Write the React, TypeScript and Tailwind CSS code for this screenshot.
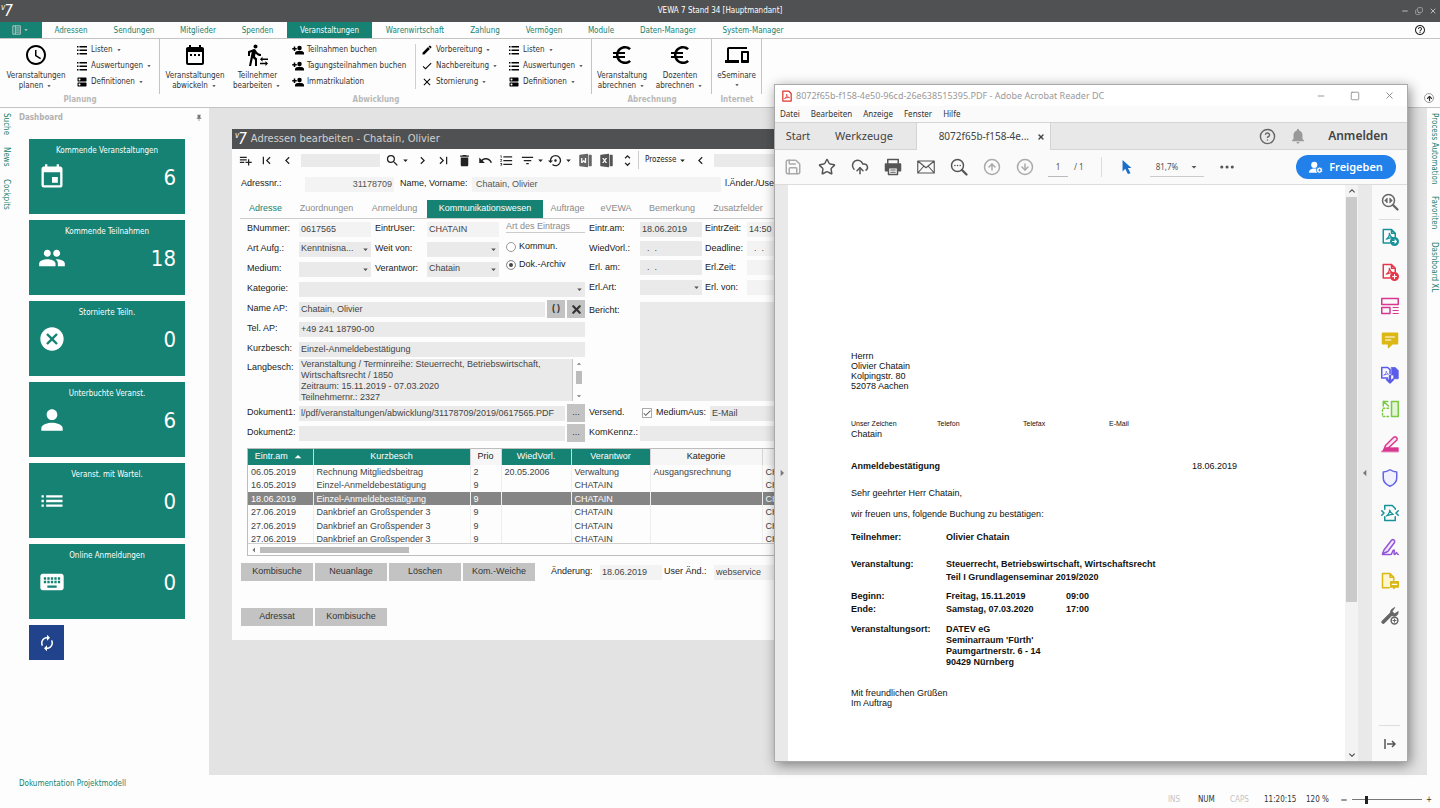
import React from 'react';
import clsx from 'clsx';
import {
  MdArrowDropDown, MdArrowDropUp, MdArrowLeft, MdArrowRight, MdAutorenew, MdCancel, MdCheck, MdChevronLeft, MdChevronRight,
  MdClear, MdDateRange, MdDelete, MdDevices, MdDns, MdEdit, MdEuroSymbol, MdEvent, MdFilterList, MdFirstPage,
  MdFormatListNumbered, MdHelpOutline, MdKeyboard, MdKeyboardArrowDown, MdKeyboardArrowUp, MdLastPage, MdList, MdPeople, MdPerson,
  MdPlaylistAdd, MdPushPin, MdSchedule, MdSearch, MdSettingsBackupRestore,
  MdTransferWithinAStation, MdUndo, MdUnfoldMore, MdNotifications,
} from 'react-icons/md';
import { RiFileWord2Fill, RiFileExcel2Fill } from 'react-icons/ri';
import {
  ArrowUp, CircleArrowDown, CircleArrowUp, CircleHelp, CloudUpload, Mail, Minus, Printer, Save, Square, Star, X, Copy,
} from 'lucide-react';

type Icon = React.ComponentType<{ className?: string }>;

const Logo: React.FC<{ className?: string }> = ({ className }) => (
  <span className={clsx('flex items-start italic text-white leading-none', className)}>
    <span className="text-[8px] leading-[8px] -mr-px">v</span>
    <span className="text-[15px] leading-[15px]">7</span>
  </span>
);

const ListIcon: Icon = ({ className }) => (
  <svg viewBox="0 0 24 24" className={className} fill="currentColor">
    <path d="M2 4h3v3H2zM2 11h3v3H2zM2 18h3v3H2zM7 4h15v3H7zM7 11h15v3H7zM7 18h15v3H7z" />
  </svg>
);

const AddPersonIcon: Icon = ({ className }) => (
  <svg viewBox="0 0 24 24" className={className} fill="currentColor">
    <circle cx="15" cy="8" r="4.500" />
    <path d="M6 21v-3c0-3 5-4.500 9-4.500s9 1.500 9 4.500v3z" />
    <path d="M3.500 5h3v3h3v3h-3v3h-3v-3h-3V8h3z" />
  </svg>
);

const MenuIcon: Icon = ({ className }) => (
  <svg viewBox="0 0 12 12" className={className} fill="none" stroke="currentColor">
    <path d="M1 1h9v10H1zM4 1v10M5 3.500h4M5 6h4M5 8.500h4" />
  </svg>
);

/* ---------- Ribbon ---------- */

const menuTabs = [
  { label: 'Adressen', width: 'w-[58px]' },
  { label: 'Sendungen', width: 'w-[68px]' },
  { label: 'Mitglieder', width: 'w-[60px]' },
  { label: 'Spenden', width: 'w-[59px]' },
  { label: 'Veranstaltungen', width: 'w-[85px]', active: true },
  { label: 'Warenwirtschaft', width: 'w-[86px]' },
  { label: 'Zahlung', width: 'w-[54px]' },
  { label: 'Vermögen', width: 'w-[64px]' },
  { label: 'Module', width: 'w-[50px]' },
  { label: 'Daten-Manager', width: 'w-[84px]' },
  { label: 'System-Manager', width: 'w-[86px]' },
];

const BigButton: React.FC<{ icon: Icon; lines: string[]; className?: string }> = ({ icon: Icon, lines, className }) => (
  <button className={clsx('flex flex-col items-center pt-1 leading-[10px] cursor-pointer', className)}>
    <Icon className="size-6 mb-1 text-black" />
    {lines.map((line, i) => (
      <span key={line} className="flex items-center gap-[2px] whitespace-nowrap">
        {line}
        {i === 1 && <MdArrowDropDown className="size-2" />}
      </span>
    ))}
    {lines.length === 1 && <MdArrowDropDown className="size-2" />}
  </button>
);

const SmallButtons: React.FC<{ items: { icon: Icon; label: string; menu?: boolean }[]; className?: string }> = ({ items, className }) => (
  <div className={clsx('flex flex-col pt-[3px]', className)}>
    {items.map(({ icon: Icon, label, menu }) => (
      <button key={label} className="h-4 flex items-center whitespace-nowrap cursor-pointer">
        <Icon className="size-3 mr-[3px] text-black" />
        {label}
        {menu && <MdArrowDropDown className="size-2 ml-[2px]" />}
      </button>
    ))}
  </div>
);

const RibbonGroup: React.FC<{ title: string; className?: string; children: React.ReactNode }> = ({ title, className, children }) => (
  <section className={clsx('flex flex-col', className)}>
    <div className="flex h-[55px] border-r border-[#c4c4c4]">{children}</div>
    <h2 className="text-center font-bold text-[#b9b9b9] leading-3">{title}</h2>
  </section>
);

const listItems = [
  { icon: ListIcon, label: 'Listen', menu: true },
  { icon: ListIcon, label: 'Auswertungen', menu: true },
  { icon: MdDns, label: 'Definitionen', menu: true },
];

const Ribbon: React.FC = () => (
  <div className="h-[70px] flex border-y border-[#c4c4c4] bg-[#fdfdfd] text-[#333]">
    <RibbonGroup title="Planung" className="w-[160px]">
      <BigButton icon={MdSchedule} lines={['Veranstaltungen', 'planen']} className="w-[72px]" />
      <SmallButtons items={listItems} className="ml-1" />
    </RibbonGroup>
    <RibbonGroup title="Abwicklung" className="w-[432px]">
      <BigButton icon={MdDateRange} lines={['Veranstaltungen', 'abwickeln']} className="w-[70px]" />
      <BigButton icon={MdTransferWithinAStation} lines={['Teilnehmer', 'bearbeiten']} className="w-[55px]" />
      <SmallButtons
        className="ml-[7px] w-[123px]"
        items={[
          { icon: AddPersonIcon, label: 'Teilnahmen buchen' },
          { icon: AddPersonIcon, label: 'Tagungsteilnahmen buchen' },
          { icon: AddPersonIcon, label: 'Immatrikulation' },
        ]}
      />
      <div className="my-[5px] border-l border-[#d0d0d0]" />
      <SmallButtons
        className="ml-[5px] w-[87px]"
        items={[
          { icon: MdEdit, label: 'Vorbereitung', menu: true },
          { icon: MdCheck, label: 'Nachbereitung', menu: true },
          { icon: MdClear, label: 'Stornierung', menu: true },
        ]}
      />
      <SmallButtons items={listItems} />
    </RibbonGroup>
    <RibbonGroup title="Abrechnung" className="w-[120px]">
      <BigButton icon={MdEuroSymbol} lines={['Veranstaltung', 'abrechnen']} className="w-[60px]" />
      <BigButton icon={MdEuroSymbol} lines={['Dozenten', 'abrechnen']} className="w-[56px]" />
    </RibbonGroup>
    <RibbonGroup title="Internet" className="w-[50px]">
      <BigButton icon={MdDevices} lines={['eSeminare']} className="w-[49px]" />
    </RibbonGroup>
    <button aria-label="Menüband minimieren" className="ml-auto mr-[6px] mb-1 self-end size-[10px] rounded-full border border-[#999] flex items-center justify-center">
      <ArrowUp className="size-[7px]" strokeWidth={4} />
    </button>
  </div>
);

/* ---------- Dashboard ---------- */

const tiles = [
  { label: 'Kommende Veranstaltungen', value: 6, icon: MdEvent, size: 'size-7' },
  { label: 'Kommende Teilnahmen', value: 18, icon: MdPeople, size: 'size-7' },
  { label: 'Stornierte Teiln.', value: 0, icon: MdCancel, size: 'size-7' },
  { label: 'Unterbuchte Veranst.', value: 6, icon: MdPerson, size: 'size-8' },
  { label: 'Veranst. mit Wartel.', value: 0, icon: MdList, size: 'size-7' },
  { label: 'Online Anmeldungen', value: 0, icon: MdKeyboard, size: 'size-7' },
];

const SideRail: React.FC<{ items: string[]; className?: string }> = ({ items, className }) => (
  <nav className={clsx('shrink-0 flex flex-col items-center gap-3 pt-[5px] text-[#17826f]', className)}>
    {items.map((item) => (
      <a key={item} href="#" className="[writing-mode:vertical-rl] leading-3 whitespace-nowrap">{item}</a>
    ))}
  </nav>
);

const Dashboard: React.FC = () => (
  <aside className="w-[197px] shrink-0">
    <header className="h-[31px] pt-1 pl-[7px] pr-[6px] flex items-start justify-between">
      <h2 className="font-bold text-[#b0b0b0] leading-3">Dashboard</h2>
      <button aria-label="Anheften" className="h-3 flex items-center"><MdPushPin className="size-2 text-[#777]" /></button>
    </header>
    <div className="flex flex-col gap-[6px] pl-[17px] pr-6">
      {tiles.map(({ label, value, icon: Icon, size }) => (
        <button key={label} className="h-[75px] bg-[#158273] text-white flex flex-col pt-[6px] cursor-pointer">
          <span className="w-full text-center leading-3">{label}</span>
          <span className="w-full flex items-start justify-between pl-[7px] pr-[9px] pt-1">
            <span className="size-8 flex items-center justify-center">
              <Icon className={size} />
            </span>
            <span className="text-[22px] leading-[34px]">{value}</span>
          </span>
        </button>
      ))}
      <button aria-label="Aktualisieren" className="size-[35px] bg-[#20438c] text-white flex items-center justify-center cursor-pointer">
        <MdAutorenew className="size-[18px]" />
      </button>
    </div>
  </aside>
);

/* ---------- Address window ---------- */

const fieldStyle = 'h-[15px] min-w-0 px-[2px] pb-px text-[#444] outline-none';

interface FieldProps {
  id: string;
  label: string;
  value?: string;
  light?: boolean;
  labelClass: string;
  fieldClass: string;
}

const Field: React.FC<FieldProps> = ({ id, label, value = '', light, labelClass, fieldClass }) => (
  <>
    <label htmlFor={id} className={clsx('shrink-0 whitespace-nowrap', labelClass)}>{label}</label>
    <input id={id} defaultValue={value} className={clsx(fieldStyle, light ? 'bg-[#f3f3f3]' : 'bg-[#eaeaea]', fieldClass)} />
  </>
);

const SelectField: React.FC<FieldProps> = ({ id, label, value = '', labelClass, fieldClass }) => (
  <>
    <label htmlFor={id} className={clsx('shrink-0 whitespace-nowrap', labelClass)}>{label}</label>
    <span className={clsx('relative flex', fieldClass)}>
      <select id={id} defaultValue={value} className={clsx(fieldStyle, 'w-full appearance-none bg-[#eaeaea] pr-3')}>
        <option>{value}</option>
      </select>
      <MdArrowDropDown className="absolute right-0 top-[2px] size-[11px] text-[#555] pointer-events-none" />
    </span>
  </>
);

const ToolButton: React.FC<{ icon: Icon; label: string; menu?: boolean; className?: string }> = ({ icon: Icon, label, menu, className }) => (
  <button aria-label={label} className={clsx('h-full shrink-0 flex items-center justify-center cursor-pointer', menu ? 'w-7' : 'w-[21px]', className)}>
    <Icon className="size-[15px]" />
    {menu && <MdArrowDropDown className="size-[11px]" />}
  </button>
);

const formTabs = [
  { label: 'Adresse', width: 'w-[51px]', color: 'text-[#17826f]' },
  { label: 'Zuordnungen', width: 'w-[71px]' },
  { label: 'Anmeldung', width: 'w-[65px]' },
  { label: 'Kommunikationswesen', width: 'w-[116px]', color: 'bg-[#158273] text-white' },
  { label: 'Aufträge', width: 'w-[49px]' },
  { label: 'eVEWA', width: 'w-[48px]' },
  { label: 'Bemerkung', width: 'w-[64px]' },
  { label: 'Zusatzfelder', width: 'w-[68px]' },
];

const columns = [
  { label: 'Eintr.am', width: 'w-[65px]', green: true },
  { label: 'Kurzbesch', width: 'w-[157px]', green: true },
  { label: 'Prio', width: 'w-[31px]' },
  { label: 'WiedVorl.', width: 'w-[70px]', green: true },
  { label: 'Verantwor', width: 'w-[79px]', green: true },
  { label: 'Kategorie', width: 'w-[112px]' },
  { label: '', width: 'w-[30px]' },
];

const rows = [
  ['06.05.2019', 'Rechnung Mitgliedsbeitrag', '2', '20.05.2006', 'Verwaltung', 'Ausgangsrechnung', 'CH'],
  ['16.05.2019', 'Einzel-Anmeldebestätigung', '9', '', 'CHATAIN', '', 'CH'],
  ['18.06.2019', 'Einzel-Anmeldebestätigung', '9', '', 'CHATAIN', '', 'CH'],
  ['27.06.2019', 'Dankbrief an Großspender 3', '9', '', 'CHATAIN', '', 'CH'],
  ['27.06.2019', 'Dankbrief an Großspender 3', '9', '', 'CHATAIN', '', 'CH'],
  ['27.06.2019', 'Dankbrief an Großspender 3', '9', '', 'CHATAIN', '', 'CH'],
];

const greyButton = 'bg-[#c3c3c3] text-[#333] flex items-center justify-center cursor-pointer';
const row = 'h-5 flex items-center';

const HistoryTable: React.FC = () => (
  <div className="border border-[#bdbdbd]">
    <div className="h-[94px] overflow-hidden">
      <table className="table-fixed w-[544px] border-collapse text-[#444]">
        <thead>
          <tr className="h-4">
            {columns.map((col, i) => (
              <th
                key={i}
                className={clsx('p-0 font-normal border-l border-[#d5d5d5] first:border-l-0', col.width, col.green ? 'bg-[#158273] text-white' : 'bg-[#f6f6f6] text-[#222]')}
              >
                <span className="flex items-center justify-center">
                  {col.label}
                  {i === 0 && <MdArrowDropUp className="size-4 ml-[2px] -my-1" />}
                </span>
              </th>
            ))}
          </tr>
        </thead>
        <tbody>
          {rows.map((cells, r) => (
            <tr key={r} className={clsx('odd:h-[13px] even:h-[14px]', r === 2 && 'bg-[#858585] text-white')}>
              {cells.map((cell, c) => (
                <td key={c} className="p-0 pl-[3px] leading-[12px] whitespace-nowrap border-l border-[#eee] first:border-l-0">{cell}</td>
              ))}
            </tr>
          ))}
        </tbody>
      </table>
    </div>
    <div className="h-[12px] flex items-center border-t border-[#cfcfcf]">
      <MdArrowLeft className="size-3 text-[#777]" />
      <div className="w-[149px] h-[6px] bg-[#bcbcbc]" />
    </div>
  </div>
);

const AddressWindow: React.FC = () => (
  <section className="w-[560px] h-[511px] overflow-hidden bg-[#fdfdfd] font-['Liberation_Sans',Arial,sans-serif] text-[9px] text-[#222]">
    <header className="h-5 bg-[#505153] flex items-center gap-1 pl-[3px] font-['DejaVu_Sans_Condensed','DejaVu_Sans',sans-serif]">
      <Logo />
      <h1 className="text-[11px] text-[#d2d2d2]">Adressen bearbeiten - Chatain, Olivier</h1>
    </header>

    <div className="h-[22px] flex items-center pl-[3px] text-[#222]">
      <ToolButton icon={MdPlaylistAdd} label="Neu" />
      <ToolButton icon={MdFirstPage} label="Erster" />
      <ToolButton icon={MdChevronLeft} label="Zurück" />
      <input aria-label="Suchbegriff" className="w-[79px] h-[13px] ml-[3px] bg-[#eaeaea]" />
      <ToolButton icon={MdSearch} label="Suchen" menu className="ml-1" />
      <ToolButton icon={MdChevronRight} label="Weiter" />
      <ToolButton icon={MdLastPage} label="Letzter" />
      <ToolButton icon={MdDelete} label="Löschen" />
      <ToolButton icon={MdUndo} label="Rückgängig" />
      <ToolButton icon={MdFormatListNumbered} label="Liste" />
      <ToolButton icon={MdFilterList} label="Filter" menu className="ml-[2px]" />
      <ToolButton icon={MdSettingsBackupRestore} label="Verlauf" menu />
      <ToolButton icon={RiFileWord2Fill} label="Word" className="text-[#666]" />
      <ToolButton icon={RiFileExcel2Fill} label="Excel" className="text-[#555]" />
      <ToolButton icon={MdUnfoldMore} label="Mehr" />
      <div className="h-[18px] shrink-0 border-l border-[#ccc]" />
      <button className="ml-[6px] flex shrink-0 items-center font-['DejaVu_Sans_Condensed','DejaVu_Sans',sans-serif] text-[8px]">
        Prozesse<MdArrowDropDown className="size-[11px]" />
      </button>
      <ToolButton icon={MdChevronLeft} label="Prozess zurück" className="ml-[2px]" />
      <input aria-label="Prozess" className="flex-1 min-w-0 h-[13px] ml-[3px] bg-[#eaeaea]" />
    </div>

    <div className="h-[26px] flex items-center pl-[9px]">
      <label htmlFor="adressnr" className="w-[64px] shrink-0">Adressnr.:</label>
      <input id="adressnr" defaultValue="31178709" className="w-[89px] h-[15px] px-[2px] bg-[#f3f3f3] text-right text-[#555]" />
      <label htmlFor="name" className="w-[78px] shrink-0 pl-[6px] whitespace-nowrap">Name, Vorname:</label>
      <input id="name" defaultValue="Chatain, Olivier" className="w-[249px] h-[15px] px-1 bg-[#f3f3f3] text-[#555]" />
      <span className="pl-1 whitespace-nowrap">l.Änder./Use</span>
    </div>

    <div role="tablist" className="ml-2 h-[22px] pt-[3px] flex border-b border-[#ccc]">
      {formTabs.map(({ label, width, color = 'text-[#8c8c8c]' }) => (
        <button key={label} role="tab" className={clsx('shrink-0 cursor-pointer', width, color)}>{label}</button>
      ))}
    </div>

    <div className="flex gap-1 pl-[15px]">
      <div className="w-[338px] shrink-0">
        <div className="flex">
          <div className="w-[252px] shrink-0">
            <div className={row}>
              <Field id="bnummer" label="BNummer:" value="0617565" light labelClass="w-[52px]" fieldClass="w-[72px] mr-1" />
              <Field id="eintruser" label="EintrUser:" value="CHATAIN" light labelClass="w-[52px]" fieldClass="w-[72px]" />
            </div>
            <div className={row}>
              <SelectField id="artaufg" label="Art Aufg.:" value="Kenntnisna..." labelClass="w-[52px]" fieldClass="w-[72px] mr-1" />
              <SelectField id="weitvon" label="Weit von:" labelClass="w-[52px]" fieldClass="w-[72px]" />
            </div>
            <div className={row}>
              <SelectField id="medium" label="Medium:" labelClass="w-[52px]" fieldClass="w-[72px] mr-1" />
              <SelectField id="verantwor" label="Verantwor:" value="Chatain" labelClass="w-[52px]" fieldClass="w-[72px]" />
            </div>
          </div>
          <fieldset className="flex-1 ml-[7px] flex flex-col">
            <legend className="w-full pt-[2px] leading-[11px] border-b border-[#ccc] text-[#8c8c8c] whitespace-nowrap">Art des Eintrags</legend>
            <label className="h-[18px] mt-[5px] flex items-center gap-[3px]">
              <input type="radio" name="art" className="size-[10px] rounded-full border border-[#999] bg-white appearance-none" />
              Kommun.
            </label>
            <label className="h-[18px] flex items-center gap-[3px]">
              <input type="radio" name="art" defaultChecked className="size-[10px] rounded-full border border-[#999] bg-white appearance-none checked:bg-[#444] checked:shadow-[inset_0_0_0_2px_white]" />
              Dok.-Archiv
            </label>
          </fieldset>
        </div>
        <div className={row}>
          <SelectField id="kategorie" label="Kategorie:" labelClass="w-[52px]" fieldClass="flex-1" />
        </div>
        <div className={row}>
          <Field id="nameap" label="Name AP:" value="Chatain, Olivier" labelClass="w-[52px]" fieldClass="flex-1" />
          <button aria-label="Neu laden" className={clsx(greyButton, 'size-[18px] ml-[2px] font-bold gap-[2px]')}><span>(</span><span>)</span></button>
          <button aria-label="Leeren" className={clsx(greyButton, 'size-[18px] ml-[2px]')}><X className="size-[13px]" strokeWidth={4} /></button>
        </div>
        <div className={row}>
          <Field id="telap" label="Tel. AP:" value="+49 241 18790-00" labelClass="w-[52px]" fieldClass="flex-1" />
        </div>
        <div className={row}>
          <Field id="kurz" label="Kurzbesch:" value="Einzel-Anmeldebestätigung" labelClass="w-[52px]" fieldClass="flex-1" />
        </div>
        <div className="h-11 flex items-start">
          <label htmlFor="lang" className="w-[52px] shrink-0 pt-[2px]">Langbesch:</label>
          <textarea
            id="lang"
            className="flex-1 h-[42px] px-[2px] bg-[#eaeaea] border-r border-[#c4c4c4] text-[#444] leading-[11px] resize-none overflow-hidden whitespace-pre"
            defaultValue={'Veranstaltung / Terminreihe: Steuerrecht, Betriebswirtschaft,\nWirtschaftsrecht / 1850\nZeitraum: 15.11.2019 - 07.03.2020\nTeilnehmernr.: 2327'}
          />
          <div className="w-3 h-[42px] flex flex-col items-center justify-between text-[#777]">
            <MdArrowDropUp className="size-[10px]" />
            <div className="w-[6px] h-[13px] mb-[5px] bg-[#bcbcbc]" />
            <MdArrowDropDown className="size-[10px]" />
          </div>
        </div>
        <div className={row}>
          <Field id="dok1" label="Dokument1:" value="l/pdf/veranstaltungen/abwicklung/31178709/2019/0617565.PDF" labelClass="w-[52px]" fieldClass="flex-1" />
          <button aria-label="Dokument1 wählen" className={clsx(greyButton, 'size-[18px] ml-[2px]')}>...</button>
        </div>
        <div className={row}>
          <Field id="dok2" label="Dokument2:" labelClass="w-[52px]" fieldClass="flex-1" />
          <button aria-label="Dokument2 wählen" className={clsx(greyButton, 'size-[18px] ml-[2px]')}>...</button>
        </div>
      </div>

      <div className="flex-1 min-w-0">
        <div className={row}>
          <Field id="eintram" label="Eintr.am:" value="18.06.2019" labelClass="w-[51px]" fieldClass="w-[62px] mr-[3px]" />
          <Field id="eintrzeit" label="EintrZeit:" value="14:50" light labelClass="w-[42px]" fieldClass="flex-1" />
        </div>
        <div className="h-[19px] flex items-center">
          <Field id="wied" label="WiedVorl.:" value="  .  ." labelClass="w-[51px]" fieldClass="w-[62px] mr-[3px]" />
          <Field id="deadline" label="Deadline:" value="  .  ." light labelClass="w-[42px]" fieldClass="flex-1" />
        </div>
        <div className="h-[19px] flex items-center">
          <Field id="erlam" label="Erl. am:" value="  .  ." labelClass="w-[51px]" fieldClass="w-[62px] mr-[3px]" />
          <Field id="erlzeit" label="Erl.Zeit:" light labelClass="w-[42px]" fieldClass="flex-1" />
        </div>
        <div className="h-[21px] flex items-center">
          <SelectField id="erlart" label="Erl.Art:" labelClass="w-[51px]" fieldClass="w-[62px] mr-[3px]" />
          <Field id="erlvon" label="Erl. von:" light labelClass="w-[42px]" fieldClass="flex-1" />
        </div>
        <div className="h-[105px] flex pt-1">
          <label htmlFor="bericht" className="w-[51px] shrink-0 pt-[2px]">Bericht:</label>
          <textarea id="bericht" className="flex-1 min-w-0 h-[99px] bg-[#eaeaea] resize-none" />
        </div>
        <div className={row}>
          <label htmlFor="versend" className="w-[53px] shrink-0">Versend.</label>
          <span className="relative flex shrink-0 mr-1">
            <input id="versend" type="checkbox" defaultChecked className="size-[10px] border border-[#aaa] bg-white appearance-none" />
            <MdCheck className="absolute left-0 top-0 size-[10px] text-[#555] pointer-events-none" />
          </span>
          <Field id="mediumaus" label="MediumAus:" value="E-Mail" labelClass="w-[54px]" fieldClass="flex-1" />
        </div>
        <div className={row}>
          <Field id="komkennz" label="KomKennz.:" labelClass="w-[51px]" fieldClass="flex-1" />
        </div>
      </div>
    </div>

    <div className="pl-[15px] pt-[5px]">
      <HistoryTable />
    </div>

    <div className="pl-[9px] mt-[7px] flex items-center gap-[2px]">
      {['Kombisuche', 'Neuanlage', 'Löschen', 'Kom.-Weiche'].map((label) => (
        <button key={label} className={clsx(greyButton, 'w-[72px] h-[18px] shrink-0')}>{label}</button>
      ))}
      <div className="flex flex-1 min-w-0 items-center pl-[14px]">
        <Field id="aenderung" label="Änderung:" value="18.06.2019" light labelClass="w-[49px]" fieldClass="w-[62px]" />
        <Field id="useraend" label="User Änd.:" value="webservice" light labelClass="w-[52px] pl-[2px]" fieldClass="flex-1" />
      </div>
    </div>
    <div className="pl-[9px] mt-[27px] flex gap-[2px]">
      {['Adressat', 'Kombisuche'].map((label) => (
        <button key={label} className={clsx(greyButton, 'w-[72px] h-[18px]')}>{label}</button>
      ))}
    </div>
  </section>
);

/* ---------- Acrobat window ---------- */

const Glyph: React.FC<{ color: string; children: React.ReactNode }> = ({ color, children }) => (
  <svg viewBox="0 0 24 24" className={clsx('size-[18px]', color)} fill="none" stroke="currentColor" strokeWidth="2" strokeLinejoin="round" strokeLinecap="round">
    {children}
  </svg>
);

const swirl = 'M7 15c3-2 4.500-5 4-8 1 4 3 5.500 5 6-3-.5-6 .5-9 2z';

const railTools = [
  {
    label: 'PDF exportieren',
    icon: (
      <Glyph color="text-[#17929a]">
        <path d="M12 20H3V2h11l5 5v5M14 2v5h5" />
        <path d={swirl} strokeWidth="1.500" />
        <circle cx="18" cy="18" r="5" fill="currentColor" />
        <path d="M15.500 18h5M18.500 16l2 2-2 2" stroke="white" strokeWidth="1.500" />
      </Glyph>
    ),
  },
  {
    label: 'PDF erstellen',
    icon: (
      <Glyph color="text-[#e6374a]">
        <path d="M12 20H3V2h11l5 5v5M14 2v5h5" />
        <path d={swirl} strokeWidth="1.500" />
        <circle cx="18" cy="18" r="5" fill="currentColor" />
        <path d="M15.500 18h5M18 15.500v5" stroke="white" strokeWidth="1.500" />
      </Glyph>
    ),
  },
  {
    label: 'PDF bearbeiten',
    icon: (
      <Glyph color="text-[#d83790]">
        <path d="M1 2h22v8H1zM1 14h11v8H1z" />
        <path d="M16 14h7M16 18h7M16 22h7" strokeWidth="1.500" />
      </Glyph>
    ),
  },
  {
    label: 'Kommentieren',
    icon: (
      <Glyph color="text-[#dcb816]">
        <path d="M2 3h20v14h-7l-5 5v-5H2z" fill="currentColor" />
        <path d="M6 8h12M6 12h7" stroke="white" strokeWidth="1.500" />
      </Glyph>
    ),
  },
  {
    label: 'Dateien zusammenführen',
    icon: (
      <Glyph color="text-[#5b5bea]">
        <path d="M9 16H1V2h8l3 3v5" />
        <path d="M4 12c2-1 3-3 3-5 .5 2.500 2 3.500 3 4-2-.3-4 0-6 1z" strokeWidth="1" />
        <path d="M14 2h5l4 4v11h-6v-5h-3z" fill="currentColor" strokeWidth="1" />
        <path d="M12 13v8M8 18l4 4 4-4" strokeWidth="3" />
      </Glyph>
    ),
  },
  {
    label: 'Seiten verwalten',
    icon: (
      <Glyph color="text-[#7ac943]">
        <path d="M14 2h9v20h-9z" fill="#e2f5d4" />
        <path d="M10 22H2v-11h8" strokeDasharray="2 3" />
        <path d="M10 8L3 2M3 8V2h6" />
      </Glyph>
    ),
  },
  {
    label: 'Schwärzen',
    icon: (
      <Glyph color="text-[#d83790]">
        <path d="M6 14L17 3c2-2 6 1 4 4L10 17l-6 2z" fill="#fbe3f0" />
        <path d="M1 22l5-5h17v5z" fill="currentColor" strokeWidth="1" />
      </Glyph>
    ),
  },
  {
    label: 'Schützen',
    icon: (
      <Glyph color="text-[#6464e8]">
        <path d="M12 1c3 2 6 3 9 3v8c0 5-4 9-9 11-5-2-9-6-9-11V4c3 0 6-1 9-3z" fill="#f0f0ff" />
      </Glyph>
    ),
  },
  {
    label: 'PDF optimieren',
    icon: (
      <Glyph color="text-[#17929a]">
        <path d="M5 7V2h10l4 4v1M5 17v5h14v-5" />
        <path d="M7 16c3-2 4.500-4 4.500-8 1 4 3 5 5 6-3-.5-6 .5-9.500 2z" strokeWidth="1.500" />
        <path d="M1 9l3 3-3 3M23 9l-3 3 3 3" />
      </Glyph>
    ),
  },
  {
    label: 'Ausfüllen und unterschreiben',
    icon: (
      <Glyph color="text-[#9256d9]">
        <path d="M4 16L14 3c2-2 5 0 4 3L9 18l-7 3z" fill="#f3e8ff" />
        <path d="M2 22h11c2 0 2-6 4-6s-1 6 1 6 2-4 3-2 1 2 2 2" />
      </Glyph>
    ),
  },
  {
    label: 'Zur Kommentierung senden',
    icon: (
      <Glyph color="text-[#dcb816]">
        <path d="M11 21H2V2h10l5 5v4M12 2v5h5" fill="#fdf6d2" />
        <path d="M13 13h10v7h-4l-2 2v-2h-4z" fill="currentColor" />
        <path d="M15 16.500h6" stroke="white" strokeWidth="1.500" />
      </Glyph>
    ),
  },
  {
    label: 'Weitere Werkzeuge',
    icon: (
      <Glyph color="text-[#666]">
        <path d="M3 20L13 10" strokeWidth="5" />
        <path d="M18 1l-3 5 3 3 5-3c0 5-3 7-7 6-5-1-5-9 2-11z" fill="currentColor" strokeWidth="1" />
        <circle cx="18" cy="18" r="4.500" fill="white" />
        <path d="M16 18h4M18 16v4" strokeWidth="1.500" />
      </Glyph>
    ),
  },
];

const PdfMark: React.FC = () => (
  <svg viewBox="0 0 12 14" className="w-[10px] h-3 text-[#e0352b]" fill="none" stroke="currentColor" strokeLinejoin="round">
    <path d="M1 1h7l3 3v9H1z" strokeWidth="1.500" />
    <path d="M3 10c2-1 3-3 2.500-5 .5 2.500 2 3.500 3.500 4-2-.3-4 0-6 1z" />
  </svg>
);

const Letter: React.FC = () => (
  <article className="flex-1 bg-white pl-[63px] pt-[166px] font-['Liberation_Sans',Arial,sans-serif] text-[9px] leading-[10px] text-[#111]">
    <p>Herrn<br />Olivier Chatain<br />Kolpingstr. 80<br />52078 Aachen</p>
    <div className="mt-7 grid grid-cols-[86px_86px_86px_86px] text-[7px]">
      <span>Unser Zeichen</span><span>Telefon</span><span>Telefax</span><span>E-Mail</span>
    </div>
    <p>Chatain</p>
    <div className="mt-[22px] w-[386px] flex justify-between">
      <h2 className="font-bold">Anmeldebestätigung</h2>
      <span>18.06.2019</span>
    </div>
    <p className="mt-[17px]">Sehr geehrter Herr Chatain,</p>
    <p className="mt-[11px]">wir freuen uns, folgende Buchung zu bestätigen:</p>
    <dl className="font-bold">
      <div className="mt-[13px] flex"><dt className="w-[95px]">Teilnehmer:</dt><dd>Olivier Chatain</dd></div>
      <div className="mt-4 flex leading-[13px]">
        <dt className="w-[95px]">Veranstaltung:</dt>
        <dd>Steuerrecht, Betriebswirtschaft, Wirtschaftsrecht<br />Teil I Grundlagenseminar 2019/2020</dd>
      </div>
      <div className="mt-[6px] flex leading-[13px]"><dt className="w-[95px]">Beginn:</dt><dd className="flex"><span className="w-[120px]">Freitag, 15.11.2019</span>09:00</dd></div>
      <div className="flex leading-[13px]"><dt className="w-[95px]">Ende:</dt><dd className="flex"><span className="w-[120px]">Samstag, 07.03.2020</span>17:00</dd></div>
      <div className="mt-2 flex leading-[11px]">
        <dt className="w-[95px]">Veranstaltungsort:</dt>
        <dd>DATEV eG<br />Seminarraum 'Fürth'<br />Paumgartnerstr. 6 - 14<br />90429 Nürnberg</dd>
      </div>
    </dl>
    <p className="mt-5">Mit freundlichen Grüßen<br />Im Auftrag</p>
  </article>
);

const AcrobatWindow: React.FC = () => (
  <section className="absolute right-8 top-[84px] w-[634px] h-[678px] flex flex-col bg-white border border-[#aaa] shadow-[2px_3px_12px_rgba(0,0,0,0.45)] font-['Noto_Sans',sans-serif] text-[8px] text-[#444]">
    <header className="h-[21px] shrink-0 flex items-center pl-[7px]">
      <PdfMark />
      <h1 className="ml-1 text-[9px] text-[#999]">8072f65b-f158-4e50-96cd-26e638515395.PDF - Adobe Acrobat Reader DC</h1>
      <div className="ml-auto mr-3 flex items-center gap-6 text-[#888]">
        <button aria-label="Minimieren"><Minus className="size-[10px]" strokeWidth={2} /></button>
        <button aria-label="Maximieren"><Square className="size-[10px]" strokeWidth={2} /></button>
        <button aria-label="Schließen"><X className="size-[11px]" strokeWidth={2} /></button>
      </div>
    </header>
    <nav className="h-4 shrink-0 flex items-center gap-[11px] pl-[5px] bg-[#fafafa] text-[#333]">
      {['Datei', 'Bearbeiten', 'Anzeige', 'Fenster', 'Hilfe'].map((item) => <button key={item}>{item}</button>)}
    </nav>
    <div className="h-7 shrink-0 flex items-stretch bg-[#e8e8e8] border-y border-[#d4d4d4] text-[11px]">
      <button className="w-[46px] text-center">Start</button>
      <button className="w-[86px] text-center">Werkzeuge</button>
      <div className="w-[135px] ml-[9px] h-[27px] flex items-center justify-end gap-2 pr-[5px] bg-[#fafafa] border-x border-[#d4d4d4] text-[10px]">
        8072f65b-f158-4e...
        <button aria-label="Tab schließen"><X className="size-2" strokeWidth={4} /></button>
      </div>
      <div className="ml-auto flex items-center text-[#666]">
        <button aria-label="Hilfe"><CircleHelp className="size-[17px]" strokeWidth={2} /></button>
        <button aria-label="Benachrichtigungen" className="ml-[13px]"><MdNotifications className="size-[18px] text-[#999]" /></button>
        <button className="ml-[21px] mr-[19px] text-[12px] font-semibold text-[#444]">Anmelden</button>
      </div>
    </div>
    <div className="h-[35px] shrink-0 flex items-center bg-[#fafafa] border-b border-[#dcdcdc] text-[#555]">
      <button aria-label="Speichern" className="w-[35px] flex justify-center text-[#aaa]"><Save className="size-[18px]" strokeWidth={2} /></button>
      <button aria-label="Favorit" className="w-[33px] flex justify-center"><Star className="size-[18px]" strokeWidth={2} /></button>
      <button aria-label="Hochladen" className="w-[33px] flex justify-center"><CloudUpload className="size-[18px]" strokeWidth={2} /></button>
      <button aria-label="Drucken" className="w-[33px] flex justify-center">
        <Glyph color="text-[#555]"><path d="M5 7V2h14v5" /><path d="M2 8h20v9H2z" fill="currentColor" /><path d="M6 13h12v9H6z" fill="white" /><path d="M9 16h6M9 19h6" strokeWidth="1.500" /></Glyph>
      </button>
      <button aria-label="E-Mail" className="w-[33px] flex justify-center">
        <Glyph color="text-[#555]"><path d="M1 4h22v16H1zM1 4l11 9 11-9M1 20l8-9M23 20l-8-9" strokeWidth="1.500" /></Glyph>
      </button>
      <button aria-label="Suchen" className="w-[33px] flex justify-center">
        <Glyph color="text-[#555]"><circle cx="10" cy="10" r="8" /><path d="M16 16l6 6" strokeWidth="3" /><path d="M6.500 10h.1M10 10h.1M13.500 10h.1" /></Glyph>
      </button>
      <button aria-label="Vorherige Seite" className="w-[33px] flex justify-center text-[#aaa]"><CircleArrowUp className="size-[18px]" strokeWidth={2} /></button>
      <button aria-label="Nächste Seite" className="w-[33px] flex justify-center text-[#aaa]"><CircleArrowDown className="size-[18px]" strokeWidth={2} /></button>
      <input aria-label="Seite" defaultValue="1" className="w-5 h-[19px] ml-[7px] text-center border-b border-[#bbb]" />
      <span className="ml-[6px]">/ 1</span>
      <div className="h-5 ml-[17px] border-l border-[#ddd]" />
      <button aria-label="Auswahl" className="ml-[19px]">
        <svg viewBox="0 0 12 18" className="w-3 h-4 text-[#1b6fc9]" fill="currentColor"><path d="M1 1v13l3-3 3 6 3-1-3-6h4z" /></svg>
      </button>
      <span className="relative ml-[17px]">
        <select aria-label="Zoom" defaultValue="81,7%" className="w-[54px] h-5 pl-[6px] appearance-none border-b border-[#ccc]"><option>81,7%</option></select>
        <MdArrowDropDown className="absolute right-1 top-1 size-3 pointer-events-none" />
      </span>
      <button aria-label="Mehr" className="ml-[14px]"><Glyph color="text-[#555]"><path d="M5 12h.1M12 12h.1M19 12h.1" strokeWidth="4" /></Glyph></button>
      <button className="ml-auto mr-[11px] h-6 w-[100px] rounded-full bg-[#2180ea] text-white text-[11px] font-semibold flex items-center justify-center gap-[6px]">
        <svg viewBox="0 0 16 14" className="w-[14px] h-[13px]">
          <circle cx="6" cy="4" r="3.500" fill="currentColor" />
          <path d="M0 13c0-4 3-5 6-5s6 1 6 5z" fill="currentColor" />
          <circle cx="12" cy="10" r="3.500" fill="currentColor" stroke="#2180ea" />
          <path d="M10.500 10h3M12 8.500v3" stroke="#2180ea" />
        </svg>
        Freigeben
      </button>
    </div>
    <div className="flex-1 min-h-0 flex">
      <button aria-label="Navigation öffnen" className="w-[13px] bg-[#e9e9e9] flex items-center justify-center"><MdArrowRight className="size-4 -mx-1 shrink-0 text-[#777]" /></button>
      <Letter />
      <div className="w-[13px] shrink-0 flex flex-col items-center bg-[#f3f3f3] text-[#444]">
        <MdKeyboardArrowUp className="size-3" />
        <div className="w-[11px] h-[405px] bg-[#cacaca]" />
        <MdKeyboardArrowDown className="size-3 mt-auto" />
      </div>
      <button aria-label="Werkzeugleiste schließen" className="w-[14px] bg-[#e9e9e9] flex items-center justify-center"><MdArrowLeft className="size-4 -mx-1 shrink-0 text-[#777]" /></button>
      <div className="w-[35px] shrink-0 flex flex-col items-center bg-[#fafafa]">
        <button aria-label="Suche" className="h-[35px] w-[21px] flex items-center justify-center border-b border-[#ddd]">
          <Glyph color="text-[#666]"><circle cx="10" cy="10" r="8" /><path d="M16 16l6 6" strokeWidth="3" /><path d="M8 7l-3 3 3 3zM12 7l3 3-3 3z" fill="currentColor" strokeWidth="1" /></Glyph>
        </button>
        <div className="h-[413px] flex flex-col">
          {railTools.map(({ label, icon }) => (
            <button key={label} aria-label={label} className="flex-1 flex items-center">{icon}</button>
          ))}
        </div>
        <button aria-label="Leiste ausblenden" className="mt-auto h-[36px] w-[21px] flex items-center justify-center border-t border-[#ddd]">
          <svg viewBox="0 0 12 12" className="size-3 text-[#555]" fill="none" stroke="currentColor" strokeWidth="1.500"><path d="M1 1v10M3 6h8M8 3l3 3-3 3" /></svg>
        </button>
      </div>
    </div>
  </section>
);

/* ---------- Shell ---------- */

const App: React.FC = () => (
  <div className="relative min-h-screen flex flex-col bg-[#fdfdfd] font-['DejaVu_Sans_Condensed','DejaVu_Sans',sans-serif] text-[8px] text-[#333]">
    <header className="h-[22px] bg-[#505153] flex items-center">
      <Logo className="w-[60px] pl-[1px]" />
      <h1 className="flex-1 text-center text-white">VEWA 7 Stand 34 [Hauptmandant]</h1>
      <div className="w-[60px] pr-[3px] flex justify-end items-center gap-[6px] text-[#bbb]">
        <button aria-label="Minimieren"><Minus className="size-2" strokeWidth={3} /></button>
        <button aria-label="Wiederherstellen"><Copy className="size-2 -scale-y-100" strokeWidth={2} /></button>
        <button aria-label="Schließen"><X className="size-2" strokeWidth={3} /></button>
      </div>
    </header>

    <nav className="h-4 flex items-stretch text-[#17826f]">
      <button aria-label="Anwendungsmenü" className="w-[42px] bg-[#158273] text-[#d5d5d5] flex items-center justify-center">
        <MenuIcon className="size-[10px]" /><MdArrowDropDown className="size-2" />
      </button>
      {menuTabs.map(({ label, width, active }) => (
        <button key={label} className={clsx('cursor-pointer pt-px', width, active && 'bg-[#158273] text-white')}>{label}</button>
      ))}
      <button aria-label="Hilfe" className="ml-auto mr-[14px]"><MdHelpOutline className="size-3 text-[#222]" /></button>
    </nav>

    <Ribbon />

    <div className="flex-1 flex">
      <SideRail items={['Suche', 'News', 'Cockpits']} className="w-3" />
      <Dashboard />
      <main className="flex-1 min-w-0 mb-[33px] bg-[#e3e3e3] pl-[23px] pt-[21px]">
        <AddressWindow />
      </main>
      <SideRail items={['Process Automation', 'Favoriten', 'Dashboard XL']} className="w-[13px]" />
    </div>

    <footer className="absolute inset-x-0 bottom-0 h-[33px] flex flex-col justify-between">
      <a href="#" className="pl-[19px] pt-[3px] leading-3 text-[#17826f]">Dokumentation Projektmodell</a>
      <div className="h-[17px] flex items-center justify-end pr-[8px]">
        <span className="w-[30px] text-[#c4c4c4]">INS</span>
        <span className="w-8">NUM</span>
        <span className="w-[34px] text-[#c4c4c4]">CAPS</span>
        <span className="w-[42px]">11:20:15</span>
        <span className="w-[34px]">120 %</span>
        <Minus className="size-2" strokeWidth={3} />
        <input aria-label="Zoomstufe" type="range" min="0" max="100" defaultValue="20" className="mx-1 w-[70px] h-2 appearance-none bg-[linear-gradient(#777,#777)] bg-[length:100%_1px] bg-center bg-no-repeat [&::-webkit-slider-thumb]:appearance-none [&::-webkit-slider-thumb]:w-[3px] [&::-webkit-slider-thumb]:h-2 [&::-webkit-slider-thumb]:bg-[#222]" />
        <span>+</span>
      </div>
    </footer>

    <AcrobatWindow />
  </div>
);

export default App;
